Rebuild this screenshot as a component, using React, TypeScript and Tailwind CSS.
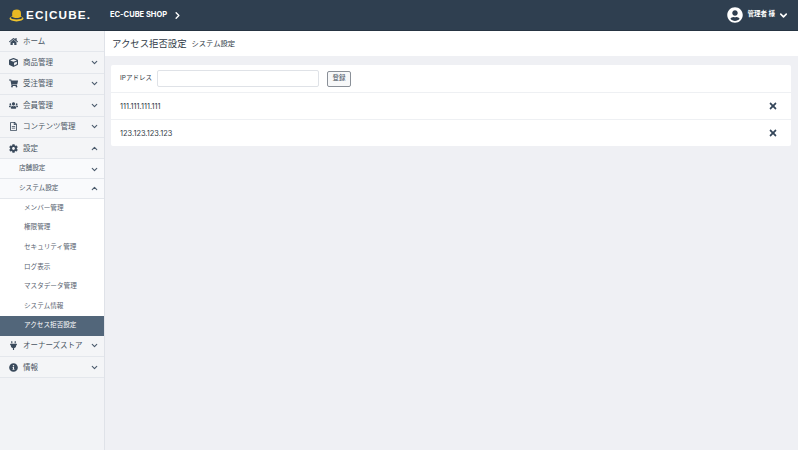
import { FaHome, FaShoppingCart, FaUsers, FaCog, FaPlug, FaInfoCircle, FaCube, FaRegFileAlt, FaUserCircle, FaTimes } from "react-icons/fa";
import { FiChevronDown, FiChevronUp, FiChevronRight } from "react-icons/fi";

const font = "[font-family:'Inter','Noto_Sans_CJK_JP','Liberation_Sans',sans-serif]";

function Chevron({ up }: { up?: boolean }) {
  const C = up ? FiChevronUp : FiChevronDown;
  return <C className="w-[9px] h-[9px] text-[#4a5a6c] [stroke-width:3]" />;
}

function Main({ icon, label, up, last }: { icon: React.ReactNode; label: string; up?: boolean; last?: boolean }) {
  return (
    <div className="h-[21.4px] flex items-center pl-[7px] pr-[5px] bg-[#f4f5f7] border-b border-[#e4e7ec] text-[7.5px] text-[#4a5563]">
      <span className="w-[12px] flex justify-center text-[#3a4a5c] text-[9px]">{icon}</span>
      <span className="ml-[4px] flex-1">{label}</span>
      {!last && <Chevron up={up} />}
    </div>
  );
}

function Sub({ label, up }: { label: string; up?: boolean }) {
  return (
    <div className="h-[19.6px] flex items-center pl-[19px] pr-[5px] pt-[1px] bg-[#f9fafc] border-b border-[#e4e7ec] text-[6.6px] text-[#4a5563]">
      <span className="flex-1">{label}</span>
      <Chevron up={up} />
    </div>
  );
}

function Leaf({ label, active }: { label: string; active?: boolean }) {
  return (
    <div className={`h-[19.6px] flex items-center pl-[24px] pt-[1px] text-[6.6px] ${active ? "bg-[#52667a] text-white" : "bg-white text-[#59636f]"}`}>
      {label}
    </div>
  );
}

function Row({ ip }: { ip: string }) {
  return (
    <div className="h-[27px] flex items-center justify-between pl-[9px] pr-[13px] border-t border-[#eef0f3] text-[7.4px] text-[#333c48]">
      <span className="pt-[1px]">{ip}</span>
      <FaTimes className="w-[10px] h-[10px] text-[#34465a]" />
    </div>
  );
}

export default function App() {
  return (
    <div className={`w-[798px] h-[450px] flex flex-col overflow-hidden bg-[#eff0f4] ${font}`}>
      <header className="h-[31px] shrink-0 flex items-center bg-[#2f3f50] text-white border-b border-[#263442]">
        <div className="w-[110px] flex items-center pl-[9px]">
          <svg width="15" height="13" viewBox="0 0 15 13" className="shrink-0">
            <ellipse cx="7.5" cy="9.6" rx="7" ry="2.8" fill="#f0c52e" />
            <ellipse cx="7.5" cy="8.8" rx="6" ry="1.6" fill="#2f3f50" />
            <path d="M3.2 4.2C3.2 1.6 5.2 0.6 7.8 0.6C10.4 0.6 12 1.8 12 4.2V7.8C10 9.4 5 9.4 3.2 7.8Z" fill="#e8b923" />
          </svg>
          <span className="ml-[2px] text-[10.5px] font-bold tracking-[1px] leading-none [font-family:'Liberation_Sans',sans-serif] scale-x-[1.12] origin-left">EC|CUBE.</span>
        </div>
        <span className="text-[7.5px] font-bold">EC-CUBE SHOP</span>
        <FiChevronRight className="ml-[5px] w-[11px] h-[11px] [stroke-width:3]" />
        <div className="ml-auto flex items-center pr-[9px]">
          <FaUserCircle className="w-[16px] h-[16px]" />
          <span className="ml-[4px] text-[6.5px] font-bold">管理者 様</span>
          <FiChevronDown className="ml-[3px] w-[11px] h-[11px] [stroke-width:3.5]" />
        </div>
      </header>
      <div className="flex flex-1 min-h-0">
        <aside className="w-[105px] shrink-0 bg-[#f2f3f6] border-r border-[#dfe2e8]">
          <Main icon={<FaHome />} label="ホーム" last />
          <Main icon={<FaCube />} label="商品管理" />
          <Main icon={<FaShoppingCart />} label="受注管理" />
          <Main icon={<FaUsers />} label="会員管理" />
          <Main icon={<FaRegFileAlt />} label="コンテンツ管理" />
          <Main icon={<FaCog />} label="設定" up />
          <Sub label="店舗設定" />
          <Sub label="システム設定" up />
          <Leaf label="メンバー管理" />
          <Leaf label="権限管理" />
          <Leaf label="セキュリティ管理" />
          <Leaf label="ログ表示" />
          <Leaf label="マスタデータ管理" />
          <Leaf label="システム情報" />
          <Leaf label="アクセス拒否設定" active />
          <Main icon={<FaPlug />} label="オーナーズストア" />
          <Main icon={<FaInfoCircle />} label="情報" />
        </aside>
        <main className="flex-1 min-w-0">
          <div className="h-[25px] bg-white flex items-center pl-[7px] pt-[1px]">
            <h1 className="text-[9.4px] text-[#2f3a46] font-normal">アクセス拒否設定</h1>
            <span className="ml-[5px] text-[7.3px] text-[#2f3a46]">システム設定</span>
          </div>
          <div className="mt-[9px] ml-[6px] w-[680px] bg-white rounded-[2px]">
            <div className="h-[27px] flex items-center pl-[9px] text-[6.5px] text-[#333c48]">
              <span className="w-[37px] pt-[1px]">IPアドレス</span>
              <div className="w-[162px] h-[17px] bg-white border border-[#dfe2e7] rounded-[2px]" />
              <button className="ml-[8px] w-[24px] h-[16px] flex items-center justify-center bg-[#f7f8f9] border border-[#8a9098] rounded-[2px] text-[6.5px] text-[#4a5563]">登録</button>
            </div>
            <Row ip="111.111.111.111" />
            <Row ip="123.123.123.123" />
          </div>
        </main>
      </div>
    </div>
  );
}
